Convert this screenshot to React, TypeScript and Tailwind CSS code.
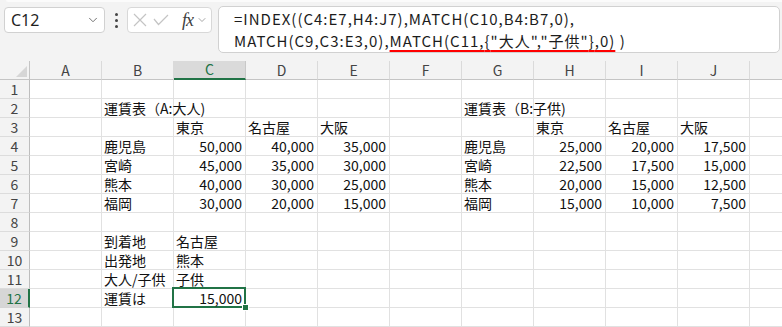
import { ChevronDown } from 'lucide-react'

const cols = ['A', 'B', 'C', 'D', 'E', 'F', 'G', 'H', 'I', 'J']

type Cell = { t: string; r?: boolean }
type Row = Record<string, Cell>

const L = (t: string): Cell => ({ t })
const N = (t: string): Cell => ({ t, r: true })

const data: Record<number, Row> = {
  2: { B: L('運賃表（A:大人)'), G: L('運賃表（B:子供)') },
  3: { C: L('東京'), D: L('名古屋'), E: L('大阪'), H: L('東京'), I: L('名古屋'), J: L('大阪') },
  4: { B: L('鹿児島'), C: N('50,000'), D: N('40,000'), E: N('35,000'), G: L('鹿児島'), H: N('25,000'), I: N('20,000'), J: N('17,500') },
  5: { B: L('宮崎'), C: N('45,000'), D: N('35,000'), E: N('30,000'), G: L('宮崎'), H: N('22,500'), I: N('17,500'), J: N('15,000') },
  6: { B: L('熊本'), C: N('40,000'), D: N('30,000'), E: N('25,000'), G: L('熊本'), H: N('20,000'), I: N('15,000'), J: N('12,500') },
  7: { B: L('福岡'), C: N('30,000'), D: N('20,000'), E: N('15,000'), G: L('福岡'), H: N('15,000'), I: N('10,000'), J: N('7,500') },
  9: { B: L('到着地'), C: L('名古屋') },
  10: { B: L('出発地'), C: L('熊本') },
  11: { B: L('大人/子供'), C: L('子供') },
  12: { B: L('運賃は'), C: N('15,000') },
}

const rows = Array.from({ length: 13 }, (_, i) => i + 1)

function FormulaBar() {
  return (
    <div className="flex items-start h-[61px] bg-[#f3f3f3] relative">
      <div className="absolute top-0 left-[6px] right-0 h-[2px] bg-[#fbfbfb] rounded-bl-[4px]" />
      <div className="ml-[4px] mt-[7px] w-[101px] h-[26px] bg-white border border-[#d1d1d1] rounded-[4px] flex items-center justify-between pl-[6px] pr-[4px]">
        <span className="text-[16px] text-[#1f1f1f]" style={{ fontFamily: '"Noto Sans", sans-serif' }}>C12</span>
        <ChevronDown className="w-[14px] h-[14px] text-[#606060]" strokeWidth={1.5} />
      </div>
      <div className="w-[22px] mt-[13px] flex flex-col items-center gap-[3px]">
        <span className="w-[3px] h-[3px] bg-[#444] rounded-full" />
        <span className="w-[3px] h-[3px] bg-[#444] rounded-full" />
        <span className="w-[3px] h-[3px] bg-[#444] rounded-full" />
      </div>
      <div className="mt-[7px] w-[85px] h-[26px] bg-white border border-[#d8d8d8] rounded-[4px] flex items-center pl-[5px] gap-[6px]">
        <svg width="14" height="14" viewBox="0 0 14 14" fill="none" stroke="#c4c4c4" strokeWidth="1.2">
          <path d="M1 1 L13 13 M13 1 L1 13" />
        </svg>
        <svg width="16" height="12" viewBox="0 0 16 12" fill="none" stroke="#c4c4c4" strokeWidth="1.2">
          <path d="M1 5 L5.5 10.5 L15 1" />
        </svg>
        <span className="ml-[7px] text-[18px] italic text-[#404040] leading-none tracking-[-1px]" style={{ fontFamily: '"Liberation Serif", serif' }}>
          fx
        </span>
        <ChevronDown className="w-[12px] h-[12px] text-[#8a8a8a] -ml-[3px]" strokeWidth={1.5} />
      </div>
      <div
        className="ml-[6px] mt-[6px] flex-1 mr-[2px] h-[47px] bg-white border border-[#d1d1d1] rounded-[5px] pl-[15px] pt-[1px] text-[15px] leading-[22px] tracking-[1px] text-[#1c1c1c]"
        style={{ fontFamily: '"Noto Sans CJK JP", sans-serif' }}
      >
        <div>=INDEX((C4:E7,H4:J7),MATCH(C10,B4:B7,0),</div>
        <div>
          MATCH(C9,C3:E3,0),
          <span className="underline decoration-[#ff0000] decoration-[1.5px] underline-offset-[3px]">MATCH(C11,{'{'}"大人","子供"{'}'},0)</span> )
        </div>
      </div>
    </div>
  )
}

export default function App() {
  return (
    <div className="w-[782px] h-[327px] overflow-hidden bg-white" style={{ fontFamily: '"Noto Sans CJK JP", sans-serif' }}>
      <FormulaBar />
      <div className="grid grid-cols-[30px_repeat(10,72px)_1fr]">
        <div className="h-[19px] bg-[#f3f3f3] border-r border-b border-[#c4c4c4] flex items-end justify-end p-[2px]">
          <svg width="11" height="11" viewBox="0 0 11 11">
            <path d="M11 0 L11 11 L0 11 Z" fill="#d6d6d6" />
          </svg>
        </div>
        {cols.map((c) =>
          c === 'C' ? (
            <div key={c} className="h-[19px] bg-[#dadada] border-r border-[#c8c8c8] border-b-2 border-b-[#217346] flex items-center justify-center text-[14px] text-[#217346]">
              {c}
            </div>
          ) : (
            <div key={c} className="h-[19px] bg-[#f3f3f3] border-r border-b border-[#dadada] border-b-[#c4c4c4] flex items-center justify-center text-[14px] text-[#444]">
              {c}
            </div>
          )
        )}
        <div className="h-[19px] bg-[#f3f3f3] border-b border-[#c4c4c4]" />
        {rows.map((r) => (
          <Row key={r} r={r} />
        ))}
      </div>
    </div>
  )
}

function Row({ r }: { r: number }) {
  const sel = r === 12
  return (
    <>
      <div
        className={
          sel
            ? 'h-[19px] bg-[#d6d6d6] border-b border-[#d4d4d4] border-r-2 border-r-[#217346] flex items-center justify-center text-[14px] text-[#217346]'
            : 'h-[19px] bg-[#f3f3f3] border-b border-[#dcdcdc] border-r border-r-[#bdbdbd] flex items-center justify-center text-[14px] text-[#444]'
        }
      >
        {r}
      </div>
      {cols.map((c) => {
        const cell = data[r]?.[c]
        const active = sel && c === 'C'
        return (
          <div
            key={c}
            className={
              'relative h-[19px] border-r border-b border-[#e1e1e1] flex items-center text-[14px] text-[#111] whitespace-nowrap ' +
              (cell?.r ? 'justify-end pr-[3px]' : 'pl-[2px]') +
              (active ? ' z-10' : '')
            }
          >
            {active && (
              <>
                <div className="absolute -left-[2px] -top-[2px] right-[-1px] bottom-[-1px] border-2 border-[#217346]" />
                <div className="absolute right-[-4px] bottom-[-4px] w-[7px] h-[7px] bg-[#217346] border border-white" />
              </>
            )}
            <span className="relative">{cell?.t}</span>
          </div>
        )
      })}
      <div className="h-[19px] border-b border-[#e1e1e1]" />
    </>
  )
}
